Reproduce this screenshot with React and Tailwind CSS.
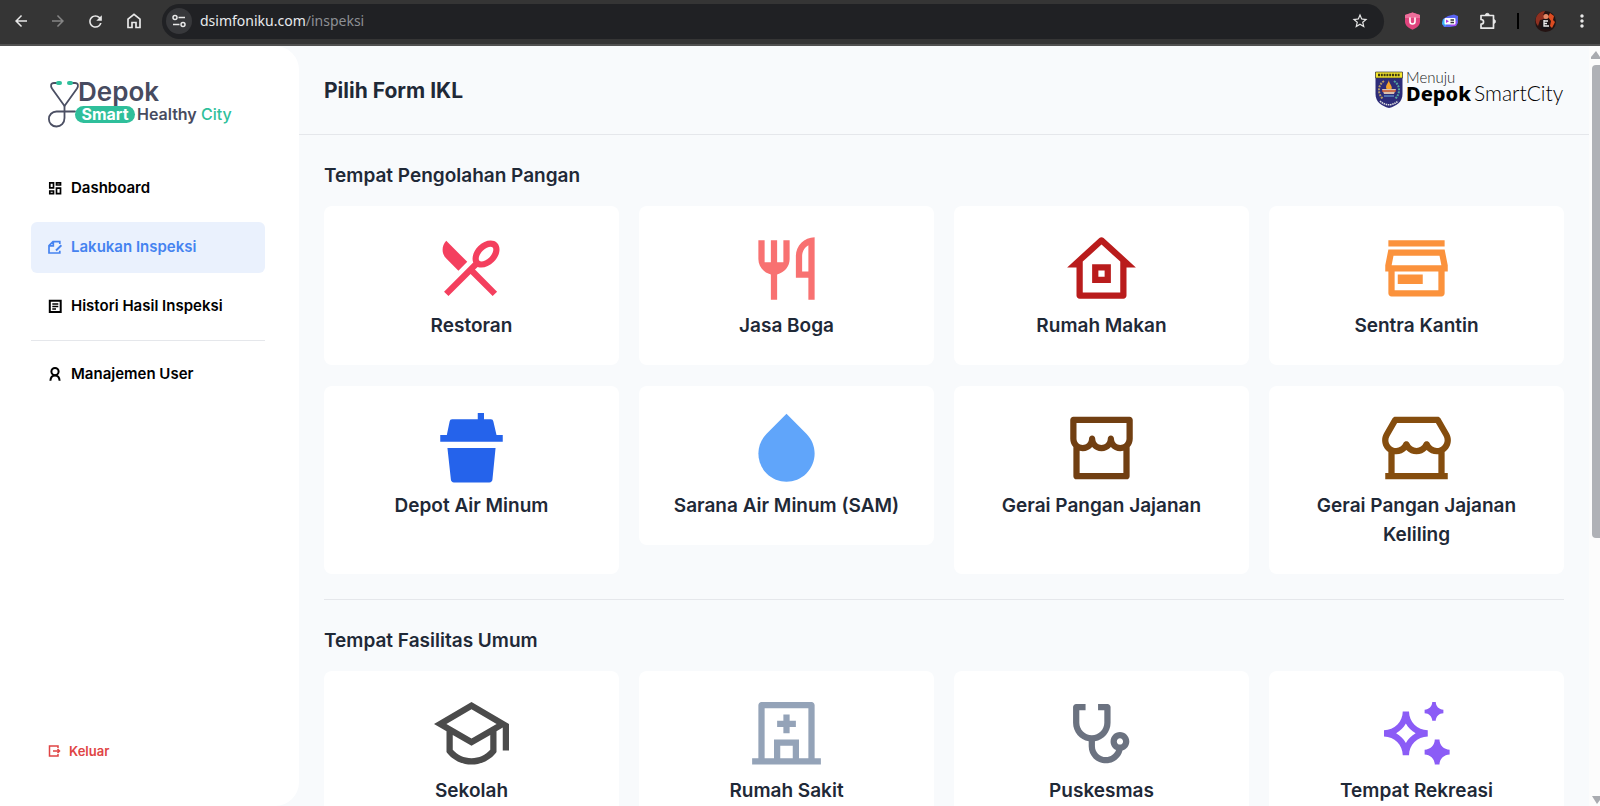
import React from "react";
import {
  RiRestaurant2Line,
  RiRestaurantLine,
  RiHome8Line,
  RiStore3Line,
  RiDropFill,
  RiStoreLine,
  RiStore2Line,
  RiGraduationCapLine,
  RiHospitalLine,
  RiStethoscopeLine,
  RiSparklingLine,
} from "react-icons/ri";
import {
  MdArrowBack,
  MdArrowForward,
  MdRefresh,
  MdStarBorder,
  MdMoreVert,
} from "react-icons/md";

function CupIcon({ size, className }) {
  return (
    <svg width={size} height={size} viewBox="0 0 24 24" fill="currentColor" className={className}>
      <path d="M14 0h2v2h2.200a.8.8 0 0 1 .8.700L20 7h2v2.200H2V7h2.100L5 2.700a.8.8 0 0 1 .8-.700H14z" />
      <path d="M4.300 11.200h15.400L18.700 21.300a1 1 0 0 1-1 .9H6.400a1 1 0 0 1-1-.9z" />
    </svg>
  );
}

const foodPlaces = [
  { label: "Restoran", Icon: RiRestaurant2Line, color: "text-[#f43f5e]", viewBox: "0.3 1.3 24 24" },
  { label: "Jasa Boga", Icon: RiRestaurantLine, color: "text-[#f87171]", viewBox: "0 0.65 24 24" },
  { label: "Rumah Makan", Icon: RiHome8Line, color: "text-[#b91c1c]" },
  { label: "Sentra Kantin", Icon: RiStore3Line, color: "text-[#fb923c]", viewBox: "0 0.7 24 24" },
  { label: "Depot Air Minum", Icon: CupIcon, color: "text-[#2563eb]" },
  { label: "Sarana Air Minum (SAM)", Icon: RiDropFill, color: "text-[#60a5fa]", short: true },
  { label: "Gerai Pangan Jajanan", Icon: RiStoreLine, color: "text-[#713f12]", viewBox: "0 0.8 24 24" },
  { label: "Gerai Pangan Jajanan Keliling", Icon: RiStore2Line, color: "text-[#854d0e]", viewBox: "0 0.8 24 24" },
];

const publicPlaces = [
  { label: "Sekolah", Icon: RiGraduationCapLine, color: "text-[#4b4b4b]", viewBox: "0 0.7 24 24" },
  { label: "Rumah Sakit", Icon: RiHospitalLine, color: "text-[#94a3b8]", viewBox: "0 0.7 24 24" },
  { label: "Puskesmas", Icon: RiStethoscopeLine, color: "text-[#6b7280]", viewBox: "1.1 1.1 24 24" },
  { label: "Tempat Rekreasi", Icon: RiSparklingLine, color: "text-[#8b5cf6]", viewBox: "-0.6 0.7 24 24" },
];

function DashboardIcon() {
  return (
    <svg width="16" height="16" viewBox="-0.5 0.5 16 16" fill="none" stroke="currentColor" strokeWidth="1.700">
      <path d="M2.300 2.300h3.700v5H2.300zM9 2.300H13v2.200H9zM9 7.600H13v5.500H9zM2.300 10.500h3.700v2.600H2.300z" />
    </svg>
  );
}

function DraftIcon() {
  return (
    <svg width="16" height="16" viewBox="0 0.5 16 16" fill="none" stroke="currentColor" strokeWidth="1.700">
      <path d="M12.800 4.500V2.200H6L2 6.200v7.300h10.800v-2.300M6.300 2.300v4H2.200" />
      <path d="m14.400 5.800-5.400 5.200" strokeWidth="1.900" />
    </svg>
  );
}

function HistoryIcon() {
  return (
    <svg width="16" height="16" viewBox="-0.5 0.5 16 16" fill="none" stroke="currentColor" strokeWidth="2">
      <path d="M2.300 2.300h10.900v11.200H2.300z" />
      <path d="M4.800 5.500h6M4.800 8h6M4.800 10.500h3.700" strokeWidth="1.400" />
    </svg>
  );
}

function UserIcon() {
  return (
    <svg width="16" height="16" viewBox="0 1 16 16" fill="none" stroke="currentColor" strokeWidth="2">
      <circle cx="8" cy="5.600" r="3.600" />
      <path d="M3.400 14.800c.2-3.100 1.800-5.400 4.600-5.400s4.400 2.300 4.600 5.400" />
    </svg>
  );
}

function LogoutIcon() {
  return (
    <svg width="14" height="14" viewBox="-0.5 0 14 14" fill="none" stroke="currentColor" strokeWidth="1.500">
      <path d="M10.500 4V2H2v10h8.500v-2M5.500 7H12M10 5l2 2-2 2" />
    </svg>
  );
}

function BrowserBar() {
  return (
    <div className="flex h-[46px] shrink-0 items-center border-b-2 border-[#515151] bg-[#353535] pr-2 pb-0.5 pl-3 text-[#e8e8e8]">
      <div className="flex items-center gap-[19px]">
        <button aria-label="Back"><MdArrowBack size={18} /></button>
        <button aria-label="Forward" className="text-[#858585]"><MdArrowForward size={18} /></button>
        <button aria-label="Reload"><MdRefresh size={19} /></button>
        <button aria-label="Home">
          <svg width="20" height="20" viewBox="0 0 20 20" fill="none" stroke="currentColor" strokeWidth="1.700">
            <path d="M4 8.200 10 3.400l6 4.800v8.300h-4v-5H8v5H4z" />
          </svg>
        </button>
      </div>
      <div className="ml-[18px] flex h-[35px] min-w-0 flex-1 items-center rounded-full bg-[#202124] pr-[15px] pl-1">
        <button aria-label="Site information" className="flex size-[26px] items-center justify-center rounded-full bg-[#37383b]">
          <svg width="14" height="14" viewBox="0 0 14 14" fill="none" stroke="currentColor" strokeWidth="1.500">
            <circle cx="3" cy="3.5" r="2" />
            <path d="M6.500 3.500H13M1 10.500H7.500" />
            <circle cx="11" cy="10.5" r="2" />
          </svg>
        </button>
        <p className="ml-2 flex-1 font-['Noto_Sans',sans-serif] text-[14px] leading-5 text-[#e8eaed]">
          dsimfoniku.com<span className="text-[#8d9094]">/inspeksi</span>
        </p>
        <button aria-label="Bookmark"><MdStarBorder size={18} /></button>
      </div>
      <div className="ml-5 flex items-center gap-5">
        <svg width="17" height="18" viewBox="0 0 17 18">
          <path d="M8.500.5 16 3v6.500c0 4-3.500 6.500-7.500 8.200C4.500 16 1 13.500 1 9.500V3z" fill="#e0447d" />
          <path d="M8.500.5 16 3v3H1V3z" fill="#ee6f9b" />
          <path d="M6 5.500v4a2.500 2.500 0 0 0 5 0v-4" fill="none" stroke="#fff" strokeWidth="1.600" />
        </svg>
        <svg width="18" height="18" viewBox="0 0 18 18">
          <path d="M7 4 13 2.500 17 4v7l-2 3-6 1H3L1 12l1-5z" fill="#5964f2" />
          <path d="M1 12l1-5 3 1v6.500z" fill="#37b6f6" />
          <path d="M9 14h6l1-5-4 1z" fill="#a648ee" />
          <rect x="3.500" y="6" width="11" height="6.500" rx="1" fill="#fff" />
          <path d="m5 7.500 3 1.700L5 11z" fill="#b23be4" />
          <path d="M9.500 8H13M9.500 10.500H13" stroke="#333" strokeWidth="1.400" />
        </svg>
        <button aria-label="Extensions">
          <svg width="18" height="18" viewBox="0 0 18 18" fill="none" stroke="currentColor" strokeWidth="1.700" strokeLinejoin="round">
            <path d="M2 3.500h12.500v12.700H2v-4c3.400 0 3.400-4.700 0-4.700z" />
            <path d="M6.300 3.300a2 2 0 0 1 4 0zM14.500 7.500a2 2 0 0 1 0 4z" fill="currentColor" strokeWidth=".8" />
          </svg>
        </button>
        <span className="h-4 w-0.5 bg-black" />
      </div>
      <svg width="21" height="21" viewBox="0 0 21 21" className="ml-4">
        <circle cx="10.500" cy="10.500" r="10.500" fill="#241312" />
        <path d="M1 7C2 3 6 0 10 0l-2 4 3-1 2 3-3 2-5 1-2 6C1 13 0 10 1 7z" fill="#8f3020" />
        <path d="m15 2 4 3-1 4 2 2-3 6-2-2 1-5-3-4z" fill="#dc4c21" />
        <circle cx="11" cy="5.500" r="2.500" fill="#e58a68" />
        <path d="M8 8h4l3 10H6z" fill="#171417" />
        <path d="M9 9v6h5M9 10h4M9 12.500h3" fill="none" stroke="#eee" strokeWidth="1.300" />
      </svg>
      <button aria-label="Menu" className="ml-4"><MdMoreVert size={20} /></button>
    </div>
  );
}

function HealthyCityLogo() {
  return (
    <svg width="186" height="56" viewBox="-1 -6 186 56" role="img" aria-label="Depok Smart Healthy City" className="font-['Inter',sans-serif]">
      <g fill="none" stroke="#4b4f63" strokeWidth="1.800" strokeLinecap="round">
        <path d="M9 3H6C2.500 3 2.500 6 4 8.500L16.500 26 29 8.500C30.500 6 30.500 3 27 3h-3" />
        <path d="M16.500 26v12c0 5-3.500 8.500-8 8.500S.9 43 .9 39s3.100-7.500 7.600-7.500H27" />
      </g>
      <rect x="8" y="1" width="6" height="4" rx="2" fill="#2fbf9b" />
      <rect x="19" y="1" width="6" height="4" rx="2" fill="#2fbf9b" />
      <rect x="27" y="26" width="60" height="17" rx="8.500" fill="#2fbf9b" />
      <text x="30" y="21" fontSize="26" fontWeight="600" fill="#474b60">Depok</text>
      <text x="57" y="40" fontSize="16" fontWeight="700" fill="#fff" textAnchor="middle">Smart</text>
      <text x="89" y="40" fontSize="16" fontWeight="600" fill="#474b60">Healthy</text>
      <text x="153" y="40" fontSize="16" fontWeight="500" fill="#2fbf9b">City</text>
    </svg>
  );
}

function SmartCityLogo() {
  return (
    <svg width="190" height="44" viewBox="-1 -3 190 44" role="img" aria-label="Menuju Depok SmartCity" className="overflow-visible">
      <path d="M.5 1h27v22c0 8-6 12-13.500 14C6.500 35 .5 31 .5 23z" fill="#2d2c78" />
      <path d="M.5 1h27v6H.5z" fill="#f3e52c" stroke="#3d3a3a" strokeWidth=".7" />
      <path d="M3 4h22" stroke="#403a10" strokeWidth="2.600" strokeDasharray="2 .8" />
      <path d="M9 10C3 14 2 22 8 28" fill="none" stroke="#b79a63" strokeWidth="2" strokeDasharray="2 1" />
      <path d="M19 10c6 4 7 12 1 18" fill="none" stroke="#55a49d" strokeWidth="2" strokeDasharray="2 1" />
      <path d="M14 9c-1 4-4 5-2.500 9h5C18 15 14 13 14 9z" fill="#f6a42c" />
      <path d="M7 18h14l-2 5H9z" fill="#d9c0b0" />
      <path d="M7 20h14" stroke="#c4502c" strokeWidth="1.500" />
      <path d="M9 25h10" stroke="#5b84c0" strokeWidth="1.500" />
      <path d="M5 30c5 5 13 5 18 0" fill="none" stroke="#ddd" strokeWidth="1.600" strokeDasharray="1.500 .7" />
      <text x="31" y="12" fontSize="15" fontWeight="300" fill="#222" fontFamily="Lato, sans-serif">Menuju</text>
      <text x="31" y="30" fontSize="20" fontWeight="800" fill="#000" fontFamily="'Noto Sans', sans-serif">Depok</text>
      <text x="99" y="30" fontSize="21" fontWeight="300" fill="#000" fontFamily="Lato, sans-serif">SmartCity</text>
    </svg>
  );
}

function NavItem({ Icon, label, active }) {
  return (
    <a
      href="#"
      aria-current={active ? "page" : undefined}
      className={`flex h-[51px] items-center gap-2 rounded-md px-4 text-[15px] font-semibold ${
        active ? "bg-[#eaf1fd] text-[#4583f0]" : "text-black"
      }`}
    >
      <Icon />
      {label}
    </a>
  );
}

function Sidebar() {
  return (
    <aside className="flex w-[299px] shrink-0 flex-col rounded-r-3xl bg-white pr-[34px] pl-[31px]">
      <div className="pt-7 pl-4">
        <HealthyCityLogo />
      </div>
      <nav className="mt-[33px] flex flex-col gap-2">
        <NavItem Icon={DashboardIcon} label="Dashboard" />
        <NavItem Icon={DraftIcon} label="Lakukan Inspeksi" active />
        <NavItem Icon={HistoryIcon} label="Histori Hasil Inspeksi" />
        <hr className="border-gray-200" />
        <NavItem Icon={UserIcon} label="Manajemen User" />
      </nav>
      <button className="mt-auto mb-[45px] flex items-center gap-2 px-4 text-[13px] leading-5 font-semibold text-[#e04444]">
        <LogoutIcon />
        Keluar
      </button>
    </aside>
  );
}

function FormCard({ label, Icon, color, short, viewBox = "0 0 24 24" }) {
  return (
    <a
      href="#"
      className={`flex flex-col items-center rounded-lg bg-white px-6 pt-[27px] pb-[25px] text-center ${short ? "self-start" : ""}`}
    >
      <Icon size={75} className={color} viewBox={viewBox} />
      <span className="mt-[3px] text-[19px] leading-[29px] font-semibold">{label}</span>
    </a>
  );
}

function Section({ title, items }) {
  return (
    <section>
      <h2 className="text-[19px] leading-[30px] font-semibold">{title}</h2>
      <div className="mt-[15px] grid grid-cols-4 gap-x-5 gap-y-[21px]">
        {items.map((item) => (
          <FormCard key={item.label} {...item} />
        ))}
      </div>
    </section>
  );
}

function ScrollRail() {
  return (
    <div aria-hidden="true" className="flex w-[11px] shrink-0 flex-col items-end bg-[#fcfcfc] pt-[5px]">
      <svg width="9" height="8" viewBox="0 0 9 8"><path d="M5 0 9 6v2H0V6z" fill="#a9abb0" /></svg>
      <div className="mt-1.5 h-[473px] w-2 rounded-l bg-[#afb1b6]" />
      <svg width="8" height="8" viewBox="0 0 8 8" className="mt-auto mb-0.5"><path d="M0 0h8v4L5 8z" fill="#a9abb0" /></svg>
    </div>
  );
}

export default function App() {
  return (
    <div className="flex h-screen flex-col overflow-hidden bg-[#f8fafc] font-['Inter',sans-serif] text-[#1f2937]">
      <BrowserBar />
      <div className="flex min-h-0 flex-1">
        <Sidebar />
        <main className="min-w-0 flex-1 overflow-hidden">
          <header className="flex h-[89px] items-center justify-between border-b border-gray-200 px-[25px]">
            <h1 className="pt-0.5 text-[21px] font-bold">Pilih Form IKL</h1>
            <SmartCityLogo />
          </header>
          <div className="px-[25px] pt-[26px]">
            <Section title="Tempat Pengolahan Pangan" items={foodPlaces} />
            <hr className="mt-[25px] mb-[26px] border-gray-200" />
            <Section title="Tempat Fasilitas Umum" items={publicPlaces} />
          </div>
        </main>
        <ScrollRail />
      </div>
    </div>
  );
}
